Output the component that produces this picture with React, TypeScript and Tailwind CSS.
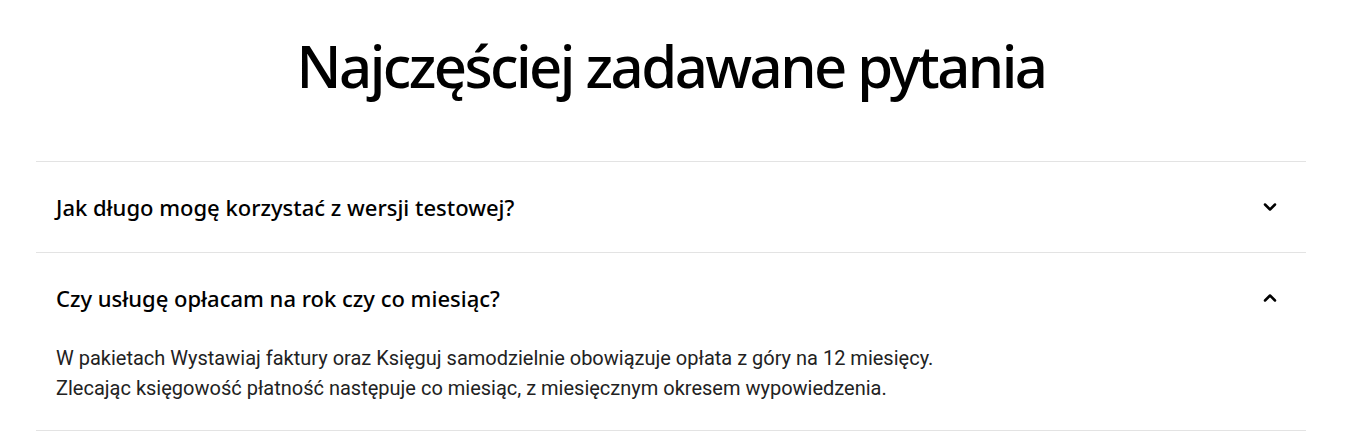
import React from "react";
import { ChevronDown, ChevronUp } from "lucide-react";

const faqs = [
  {
    q: "Jak długo mogę korzystać z wersji testowej?",
    a: null as string[] | null,
  },
  {
    q: "Czy usługę opłacam na rok czy co miesiąc?",
    a: [
      "W pakietach Wystawiaj faktury oraz Księguj samodzielnie obowiązuje opłata z góry na 12 miesięcy.",
      "Zlecając księgowość płatność następuje co miesiąc, z miesięcznym okresem wypowiedzenia.",
    ],
  },
];

export default function App() {
  return (
    <div className="w-[1342px] bg-white pl-[36px] pr-[36px] pt-[24px] text-[#111]">
      <h1 className="text-center font-['Noto_Sans',sans-serif] text-[58px] font-medium leading-[84px] tracking-[-2.55px] text-black">
        Najczęściej zadawane pytania
      </h1>
      <ul className="mt-[53px] w-[1270px] border-t border-[#e3e3e3]">
        {faqs.map((f) => (
          <li key={f.q} className="border-b border-[#e3e3e3]">
            <div className="flex h-[90px] items-center justify-between px-[20px] pr-[26px]">
              <span className="font-['Noto_Sans',sans-serif] text-[22px] font-medium text-black">
                {f.q}
              </span>
              {f.a ? (
                <ChevronUp className="h-5 w-5 text-black" strokeWidth={3} />
              ) : (
                <ChevronDown className="h-5 w-5 text-black" strokeWidth={3} />
              )}
            </div>
            {f.a && (
              <div className="px-[20px] pb-[27px] pt-0 font-['Roboto',sans-serif] text-[20px] leading-[30px] text-[#222]">
                {f.a.map((l) => (
                  <p key={l}>{l}</p>
                ))}
              </div>
            )}
          </li>
        ))}
      </ul>
    </div>
  );
}
